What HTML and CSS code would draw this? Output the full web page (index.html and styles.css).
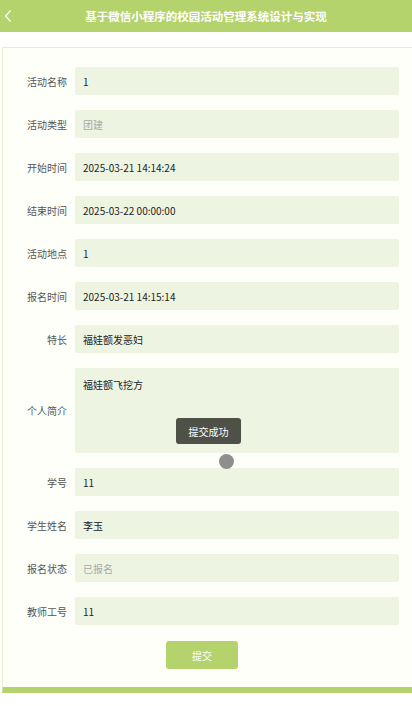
FILE: index.html
```html
<!DOCTYPE html>
<html lang="zh">
<head>
<meta charset="utf-8">
<link rel="stylesheet" href="styles.css">
</head>
<body>
<header class="topbar">
  <svg class="back" width="10" height="14" viewBox="0 0 10 14"><path d="M7.5 1.5 L2.5 7 L7.5 12.5" fill="none" stroke="#fff" stroke-width="1.3"/></svg>
  <div class="title">基于微信小程序的校园活动管理系统设计与实现</div>
</header>
<main class="card">
  <div class="row"><div class="label">活动名称</div><div class="field">1</div></div>
  <div class="row"><div class="label">活动类型</div><div class="field ph">团建</div></div>
  <div class="row"><div class="label">开始时间</div><div class="field">2025-03-21 14:14:24</div></div>
  <div class="row"><div class="label">结束时间</div><div class="field">2025-03-22 00:00:00</div></div>
  <div class="row"><div class="label">活动地点</div><div class="field">1</div></div>
  <div class="row"><div class="label">报名时间</div><div class="field">2025-03-21 14:15:14</div></div>
  <div class="row"><div class="label">特长</div><div class="field">福娃额发恶妇</div></div>
  <div class="row"><div class="label">个人简介</div><div class="field area">福娃额飞挖方</div></div>
  <div class="row"><div class="label">学号</div><div class="field">11</div></div>
  <div class="row"><div class="label">学生姓名</div><div class="field">李玉</div></div>
  <div class="row"><div class="label">报名状态</div><div class="field ph">已报名</div></div>
  <div class="row"><div class="label">教师工号</div><div class="field">11</div></div>
  <div class="actions"><button class="submit">提交</button></div>
</main>
<div class="toast">提交成功</div>
<div class="touch"></div>
</body>
</html>
```
FILE: styles.css
```css
* { box-sizing: border-box; }
body {
  margin: 0;
  background: #fffffd;
  font-family: "Microsoft YaHei", "Noto Sans CJK SC", "Liberation Sans", sans-serif;
  width: 412px;
  height: 706px;
  overflow: hidden;
  position: relative;
}
.topbar {
  height: 32px;
  background: #b4d36c;
  display: flex;
  align-items: center;
  justify-content: center;
  position: relative;
}
.back {
  position: absolute;
  left: 3px;
  top: 9px;
}
.title {
  color: #fff;
  font-size: 11.5px;
  font-weight: bold;
  letter-spacing: 0;
}
.card {
  margin: 15px 0 0 2px;
  background: #fffffa;
  border-top: 1px solid #e4ebcf;
  border-left: 1px solid #e4ebcf;
  border-bottom: 6px solid #b4d36c;
  padding: 19px 13px 18px 0;
  display: flex;
  flex-direction: column;
  gap: 15px;
}
.row {
  display: flex;
  align-items: center;
  gap: 8px;
}
.label {
  width: 64px;
  text-align: right;
  font-size: 10px;
  color: #555;
  flex: none;
}
.field {
  flex: 1;
  height: 28px;
  background: #eef4e2;
  border-radius: 2px;
  display: flex;
  align-items: center;
  padding-left: 8px;
  font-size: 10px;
  color: #222;
}
.field.ph { color: #a8a8a8; }
.field.area {
  height: 85px;
  align-items: flex-start;
  padding-top: 9px;
}
.actions {
  display: flex;
  justify-content: center;
  padding-left: 2px;
  margin-top: 1px;
}
.submit {
  width: 72px;
  height: 28px;
  border: none;
  border-radius: 3px;
  background: #b4d36c;
  color: #fff;
  font-family: inherit;
  font-size: 10px;
}
.toast {
  position: absolute;
  left: 176px;
  top: 418px;
  width: 65px;
  height: 26px;
  border-radius: 3px;
  background: rgba(50, 52, 45, 0.85);
  color: #fff;
  font-size: 10px;
  display: flex;
  align-items: center;
  justify-content: center;
}
.touch {
  position: absolute;
  left: 219px;
  top: 454px;
  width: 15px;
  height: 15px;
  border-radius: 50%;
  background: #8e8e8e;
}
```
